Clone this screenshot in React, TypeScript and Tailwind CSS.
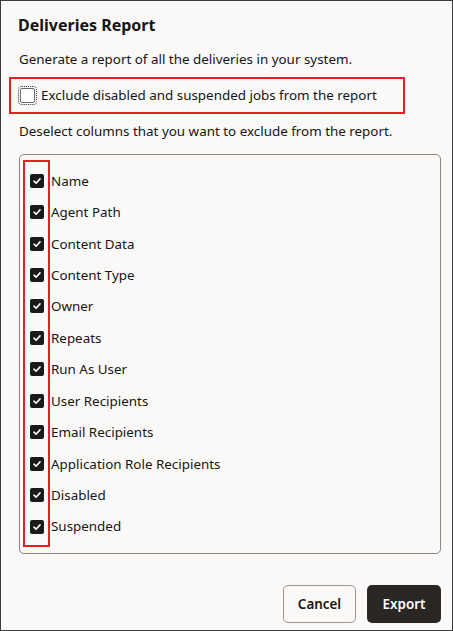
import React, { useState } from "react";

const columns = [
  "Name",
  "Agent Path",
  "Content Data",
  "Content Type",
  "Owner",
  "Repeats",
  "Run As User",
  "User Recipients",
  "Email Recipients",
  "Application Role Recipients",
  "Disabled",
  "Suspended",
];

const Check = ({ checked }: { checked: boolean }) =>
  checked ? (
    <span className="flex h-[14px] w-[14px] items-center justify-center rounded-[2px] bg-[#1c1a18]">
      <svg width="10" height="10" viewBox="0 0 10 10" fill="none">
        <path d="M2 5.2 L4.1 7.2 L8 2.9" stroke="#fff" strokeWidth="1.6" strokeLinecap="round" strokeLinejoin="round" />
      </svg>
    </span>
  ) : (
    <span className="block h-[15px] w-[15px] rounded-[2px] border border-[#6f6b68] bg-white outline-1 outline-dotted outline-offset-1 outline-[#333]" />
  );

const App = () => {
  const [exclude, setExclude] = useState(false);
  const [cols, setCols] = useState<boolean[]>(columns.map(() => true));

  return (
    <div
      className="h-[631px] w-[453px] border border-[#3d3d3d] bg-[#fbf9f8] text-[#161513]"
      style={{ fontFamily: '"Noto Sans", "Open Sans", sans-serif' }}
    >
      <h1 className="pl-[17px] pt-[13px] text-[16px] font-bold leading-[22px]">Deliveries Report</h1>
      <p className="pl-[18px] pt-[13px] text-[13.4px] leading-[20px]">
        Generate a report of all the deliveries in your system.
      </p>

      <div
        onClick={() => setExclude(!exclude)}
        className="ml-[8px] mt-[8px] flex h-[37px] w-[396px] cursor-pointer items-center gap-[6px] border-2 border-[#ee1c25] pl-[9px]"
      >
        <Check checked={exclude} />
        <span className="text-[13.4px]">Exclude disabled and suspended jobs from the report</span>
      </div>

      <p className="pl-[18px] pt-[7px] text-[13.4px] leading-[20px]">
        Deselect columns that you want to exclude from the report.
      </p>

      <div className="relative ml-[18px] mt-[13px] w-[422px] rounded-[5px] border border-[#8c8986] pb-[11px] pl-[10px] pt-[10px]">
        {columns.map((c, i) => (
          <div
            key={c}
            onClick={() => setCols(cols.map((v, j) => (j === i ? !v : v)))}
            className="flex h-[31.45px] cursor-pointer items-center gap-[7px]"
          >
            <Check checked={cols[i]} />
            <span className="text-[13.4px]">{c}</span>
          </div>
        ))}
        <div className="pointer-events-none absolute left-[3px] top-[5px] h-[387px] w-[27px] border-2 border-[#ee1c25]" />
      </div>

      <div className="mt-[31px] flex justify-end gap-[11px] pr-[11px]">
        <button className="h-[38px] w-[73px] rounded-[5px] border border-[#9c9794] bg-[#fbf9f8] text-[13.4px] font-semibold">
          Cancel
        </button>
        <button className="h-[38px] w-[74px] rounded-[5px] bg-[#2a2623] text-[13.4px] font-semibold text-white">
          Export
        </button>
      </div>
    </div>
  );
};

export default App;
